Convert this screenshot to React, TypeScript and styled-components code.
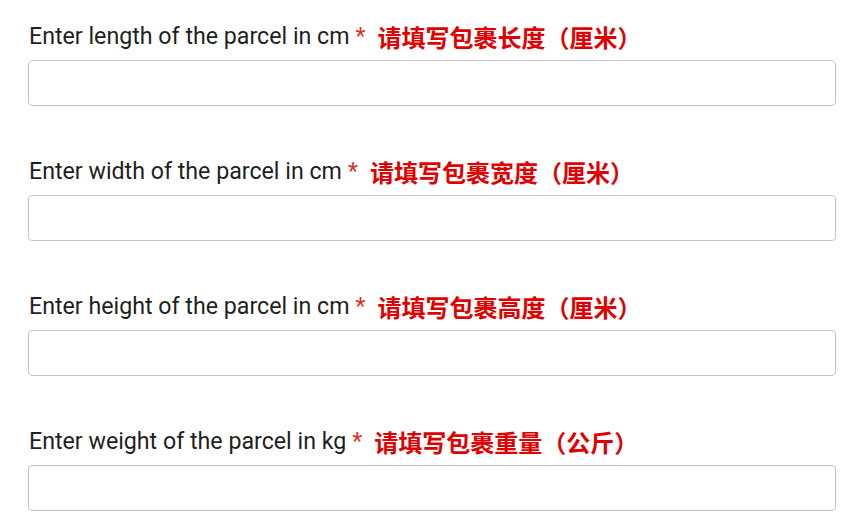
import styled, { createGlobalStyle } from 'styled-components';

const GlobalStyle = createGlobalStyle`
  body {
    margin: 0;
    background: #ffffff;
    font-family: Roboto, "Noto Sans CJK SC", sans-serif;
  }
`;

const StyledForm = styled.form`
  display: flex;
  flex-direction: column;
  gap: 51px;
  padding: 22px 23px 0 28px;
`;

const StyledField = styled.div`
  display: flex;
  flex-direction: column;
  gap: 10px;
`;

const StyledLabel = styled.label`
  display: flex;
  align-items: center;
  height: 28px;
  padding-left: 1px;
  font-size: 23.2px;
  color: #1f1f1f;
  white-space: nowrap;
`;

const StyledRequired = styled.span`
  margin-left: 6px;
  color: #d93025;
`;

const StyledHint = styled.span`
  margin-left: 12px;
  font-family: "Noto Sans CJK SC", sans-serif;
  font-size: 24px;
  font-weight: 700;
  color: #e00000;
`;

const StyledInput = styled.input`
  box-sizing: border-box;
  width: 100%;
  height: 46px;
  border: 1px solid #c4c4c4;
  border-radius: 4px;
  background: #fff;
  padding: 0 12px;
  font-size: 18px;
  font-family: Roboto, sans-serif;
  outline: none;
`;

interface Field {
  id: string;
  label: string;
  hint: string;
}

const fields: Field[] = [
  { id: 'length', label: 'Enter length of the parcel in cm', hint: '请填写包裹长度（厘米）' },
  { id: 'width', label: 'Enter width of the parcel in cm', hint: '请填写包裹宽度（厘米）' },
  { id: 'height', label: 'Enter height of the parcel in cm', hint: '请填写包裹高度（厘米）' },
  { id: 'weight', label: 'Enter weight of the parcel in kg', hint: '请填写包裹重量（公斤）' },
];

const App = () => {
  return (
    <>
      <GlobalStyle />
      <StyledForm>
        {fields.map(field => (
          <StyledField key={field.id}>
            <StyledLabel htmlFor={field.id}>
              {field.label}
              <StyledRequired>*</StyledRequired>
              <StyledHint>{field.hint}</StyledHint>
            </StyledLabel>
            <StyledInput id={field.id} type="text" />
          </StyledField>
        ))}
      </StyledForm>
    </>
  );
};

export default App;
